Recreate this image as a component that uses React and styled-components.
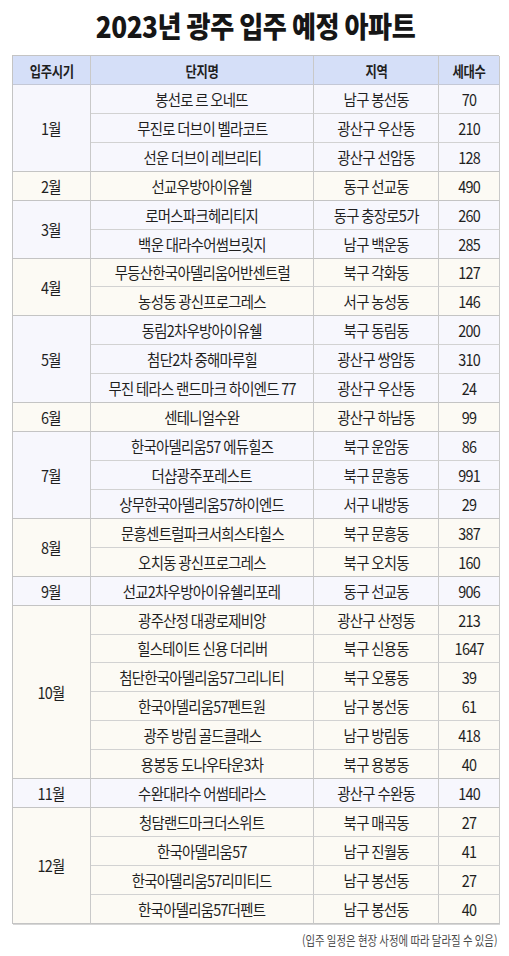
import React from 'react';
import styled, { createGlobalStyle } from 'styled-components';

const GlobalStyle = createGlobalStyle`
  html, body {
    margin: 0;
    padding: 0;
    background: #ffffff;
  }
  body {
    font-family: "Noto Sans CJK KR", "Noto Sans", sans-serif;
    color: #2a2a2a;
  }
`;

const ROW_H = 28.93;

const schedule = [
  { month: '1월', items: [
    ['봉선로 르 오네뜨', '남구 봉선동', '70'],
    ['무진로 더브이 벨라코트', '광산구 우산동', '210'],
    ['선운 더브이 레브리티', '광산구 선암동', '128'],
  ]},
  { month: '2월', items: [
    ['선교우방아이유쉘', '동구 선교동', '490'],
  ]},
  { month: '3월', items: [
    ['로머스파크헤리티지', '동구 충장로5가', '260'],
    ['백운 대라수어썸브릿지', '남구 백운동', '285'],
  ]},
  { month: '4월', items: [
    ['무등산한국아델리움어반센트럴', '북구 각화동', '127'],
    ['농성동 광신프로그레스', '서구 농성동', '146'],
  ]},
  { month: '5월', items: [
    ['동림2차우방아이유쉘', '북구 동림동', '200'],
    ['첨단2차 중해마루힐', '광산구 쌍암동', '310'],
    ['무진 테라스 랜드마크 하이엔드 77', '광산구 우산동', '24'],
  ]},
  { month: '6월', items: [
    ['센테니얼수완', '광산구 하남동', '99'],
  ]},
  { month: '7월', items: [
    ['한국아델리움57 에듀힐즈', '북구 운암동', '86'],
    ['더샵광주포레스트', '북구 문흥동', '991'],
    ['상무한국아델리움57하이엔드', '서구 내방동', '29'],
  ]},
  { month: '8월', items: [
    ['문흥센트럴파크서희스타힐스', '북구 문흥동', '387'],
    ['오치동 광신프로그레스', '북구 오치동', '160'],
  ]},
  { month: '9월', items: [
    ['선교2차우방아이유쉘리포레', '동구 선교동', '906'],
  ]},
  { month: '10월', items: [
    ['광주산정 대광로제비앙', '광산구 산정동', '213'],
    ['힐스테이트 신용 더리버', '북구 신용동', '1647'],
    ['첨단한국아델리움57그리니티', '북구 오룡동', '39'],
    ['한국아델리움57펜트원', '남구 봉선동', '61'],
    ['광주 방림 골드클래스', '남구 방림동', '418'],
    ['용봉동 도나우타운3차', '북구 용봉동', '40'],
  ]},
  { month: '11월', items: [
    ['수완대라수 어썸테라스', '광산구 수완동', '140'],
  ]},
  { month: '12월', items: [
    ['청담랜드마크더스위트', '북구 매곡동', '27'],
    ['한국아델리움57', '남구 진월동', '41'],
    ['한국아델리움57리미티드', '남구 봉선동', '27'],
    ['한국아델리움57더펜트', '남구 봉선동', '40'],
  ]},
];

const Page = styled.div`
  width: 509px;
  height: 956px;
  box-sizing: border-box;
  padding: 0 10px 0 12px;
  display: flex;
  flex-direction: column;
`;

const Title = styled.h1`
  margin: 0;
  height: 55px;
  display: flex;
  align-items: center;
  justify-content: center;
  padding-bottom: 5px;
  box-sizing: border-box;
  font-size: 29px;
  font-weight: 900;
  letter-spacing: -0.5px;
  color: #161616;
  transform: scaleX(0.9);
`;

const Table = styled.div`
  display: grid;
  grid-template-columns: 78px 223px 125px 61px;
  grid-template-rows: 29px;
  grid-auto-rows: ${ROW_H}px;
  border-top: 1px solid #c4c4c4;
  border-left: 1px solid #c4c4c4;
  box-shadow: 1px 1px 0 #d6d6d6;
`;

const Cell = styled.div`
  display: flex;
  align-items: center;
  justify-content: center;
  box-sizing: border-box;
  border-right: 1px solid #c9c9c9;
  border-bottom: 1px solid #d2d2d2;
  background: ${p => (p.$tone === 'odd' ? '#f7f7fd' : '#fcfaf4')};
  font-size: 16px;
  font-weight: 400;
  color: #1f1f1f;
  white-space: nowrap;
`;

const HeadCell = styled(Cell)`
  background: #d5dff8;
  border-bottom: 1px solid #c4c8d6;
  font-size: 15px;
  font-weight: 700;
  color: #1e1e1e;
`;

const MonthCell = styled(Cell)`
  grid-row: span ${p => p.$span};
  border-bottom: 1px solid #c4c4c4;
`;

const Squeeze = styled.span`
  display: inline-block;
  letter-spacing: ${p => (p.$head ? '-0.4px' : '-0.8px')};
  transform: scaleX(${p => (p.$head ? 0.82 : 0.9)});
  line-height: 1;
`;

const Note = styled.p`
  margin: 6px 2px 0 0;
  text-align: right;
  font-size: 13px;
  color: #4a4a4a;
  white-space: nowrap;

  span {
    display: inline-block;
    transform: scaleX(0.8);
    transform-origin: right center;
  }
`;

const headers = ['입주시기', '단지명', '지역', '세대수'];

export default function App() {
  return (
    <>
      <GlobalStyle />
      <Page>
        <Title>2023년 광주 입주 예정 아파트</Title>
        <Table>
          {headers.map(h => (
            <HeadCell key={h}>
              <Squeeze $head>{h}</Squeeze>
            </HeadCell>
          ))}
          {schedule.map((group, gi) => {
            const tone = gi % 2 === 0 ? 'odd' : 'even';
            const last = group.items.length - 1;
            return group.items.map((row, ri) => (
              <React.Fragment key={group.month + ri}>
                {ri === 0 && (
                  <MonthCell $tone={tone} $span={group.items.length}>
                    <Squeeze>{group.month}</Squeeze>
                  </MonthCell>
                )}
                {row.map((text, ci) => (
                  <Cell
                    key={ci}
                    $tone={tone}
                    style={ri === last ? { borderBottomColor: '#c4c4c4' } : undefined}
                  >
                    <Squeeze>{text}</Squeeze>
                  </Cell>
                ))}
              </React.Fragment>
            ));
          })}
        </Table>
        <Note>
          <span>(입주 일정은 현장 사정에 따라 달라질 수 있음)</span>
        </Note>
      </Page>
    </>
  );
}
